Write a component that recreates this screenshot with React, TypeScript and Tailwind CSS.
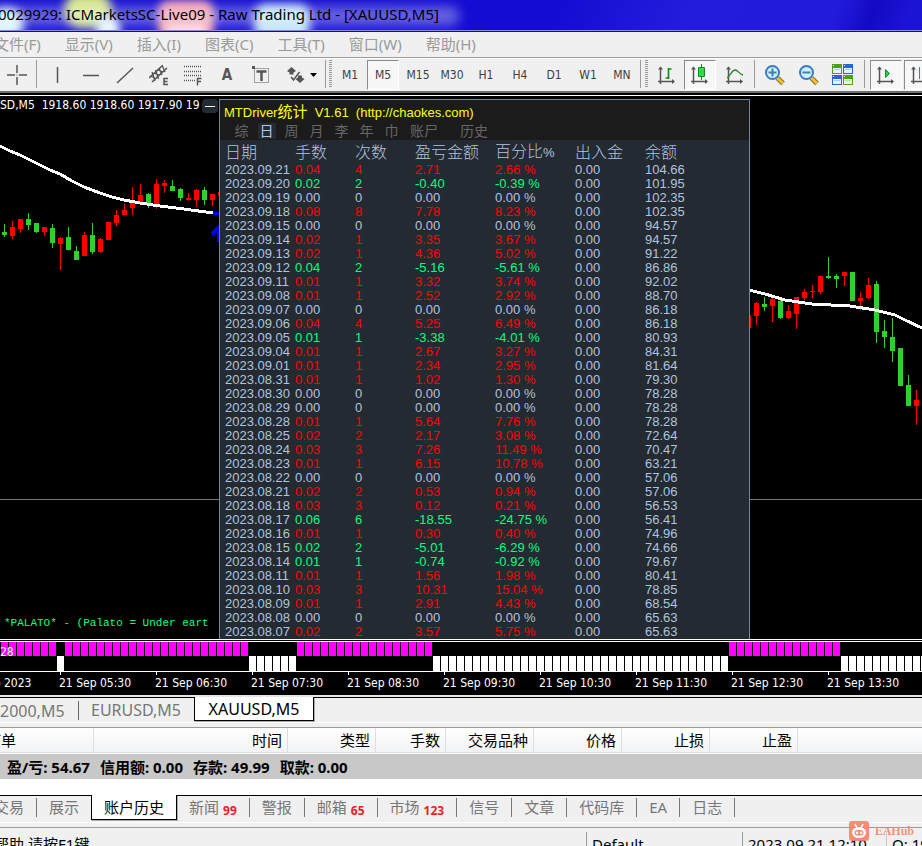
import type { ReactNode } from "react";

const UI = "font-['Noto_Sans','Noto_Sans_CJK_SC',sans-serif]";
const TAHOMA = "font-['DejaVu_Sans_Condensed','Noto_Sans',sans-serif]";

/* ---------- data ---------- */

const RECORDS = `2023.09.21|0.04|4|2.71|2.66|104.66
2023.09.20|0.02|2|-0.40|-0.39|101.95
2023.09.19|0.00|0|0.00|0.00|102.35
2023.09.18|0.08|8|7.78|8.23|102.35
2023.09.15|0.00|0|0.00|0.00|94.57
2023.09.14|0.02|1|3.35|3.67|94.57
2023.09.13|0.02|1|4.36|5.02|91.22
2023.09.12|0.04|2|-5.16|-5.61|86.86
2023.09.11|0.01|1|3.32|3.74|92.02
2023.09.08|0.01|1|2.52|2.92|88.70
2023.09.07|0.00|0|0.00|0.00|86.18
2023.09.06|0.04|4|5.25|6.49|86.18
2023.09.05|0.01|1|-3.38|-4.01|80.93
2023.09.04|0.01|1|2.67|3.27|84.31
2023.09.01|0.01|1|2.34|2.95|81.64
2023.08.31|0.01|1|1.02|1.30|79.30
2023.08.30|0.00|0|0.00|0.00|78.28
2023.08.29|0.00|0|0.00|0.00|78.28
2023.08.28|0.01|1|5.64|7.76|78.28
2023.08.25|0.02|2|2.17|3.08|72.64
2023.08.24|0.03|3|7.26|11.49|70.47
2023.08.23|0.01|1|6.15|10.78|63.21
2023.08.22|0.00|0|0.00|0.00|57.06
2023.08.21|0.02|2|0.53|0.94|57.06
2023.08.18|0.03|3|0.12|0.21|56.53
2023.08.17|0.06|6|-18.55|-24.75|56.41
2023.08.16|0.01|1|0.30|0.40|74.96
2023.08.15|0.02|2|-5.01|-6.29|74.66
2023.08.14|0.01|1|-0.74|-0.92|79.67
2023.08.11|0.01|1|1.56|1.98|80.41
2023.08.10|0.03|3|10.31|15.04|78.85
2023.08.09|0.01|1|2.91|4.43|68.54
2023.08.08|0.00|0|0.00|0.00|65.63
2023.08.07|0.02|2|3.57|5.75|65.63`
  .split("\n")
  .map((line) => line.split("|"));

/* x, rising (r) or falling (g), high, body top, body bottom, low */
type Candle = [number, "r" | "g", number, number, number, number];

const CANDLES: Candle[] = [
  [4, "g", 224, 232, 235, 237], [12, "r", 221, 227, 236, 239], [20, "r", 219, 219, 229, 233],
  [28, "g", 213, 219, 225, 230], [36, "g", 223, 223, 232, 233], [44, "r", 227, 227, 232, 236],
  [52, "g", 224, 228, 243, 248], [60, "r", 237, 238, 244, 270], [68, "g", 227, 237, 250, 250],
  [76, "g", 246, 251, 260, 260], [84, "r", 232, 235, 256, 256], [92, "g", 223, 235, 252, 254],
  [100, "r", 238, 239, 252, 253], [108, "r", 222, 222, 240, 240], [116, "r", 210, 215, 223, 226],
  [124, "r", 204, 210, 215, 215], [132, "r", 187, 200, 208, 215], [140, "r", 184, 195, 202, 205],
  [148, "g", 193, 194, 203, 208], [156, "r", 179, 184, 205, 209], [164, "r", 180, 183, 186, 193],
  [172, "g", 180, 186, 191, 191], [180, "g", 188, 189, 198, 201], [188, "r", 193, 198, 200, 201],
  [196, "r", 189, 190, 200, 207], [204, "g", 187, 190, 200, 205], [212, "r", 194, 194, 200, 206],
  [220, "r", 192, 192, 196, 196], [748, "r", 315, 315, 328, 328], [756, "r", 302, 303, 316, 325],
  [764, "g", 297, 304, 307, 311], [772, "r", 298, 299, 306, 322], [780, "g", 299, 301, 318, 319],
  [788, "r", 305, 311, 318, 319], [796, "r", 297, 297, 314, 329], [804, "r", 289, 292, 298, 300],
  [812, "r", 285, 291, 292, 298], [820, "r", 276, 276, 292, 294], [828, "g", 257, 276, 278, 279],
  [836, "g", 274, 276, 279, 288], [844, "r", 272, 272, 276, 286], [852, "g", 272, 272, 301, 301],
  [860, "r", 292, 298, 301, 310], [868, "r", 278, 285, 298, 299], [876, "g", 281, 284, 332, 343],
  [884, "g", 320, 331, 337, 348], [892, "g", 318, 337, 351, 362], [900, "g", 348, 348, 386, 386],
  [908, "g", 375, 385, 406, 406], [916, "r", 390, 400, 406, 425],
];

const CHART_TOP = 96;

/* ranges of bar indexes drawn in the upper (magenta) lane */
const isUp = (i: number) => i <= 6 || (i >= 8 && i <= 30) || (i >= 37 && i <= 53) || (i >= 91 && i <= 104);
const BARS = Array.from({ length: 240 }, (_, i) => i);
const TIMES = ["21 Sep 2023", "21 Sep 05:30", "21 Sep 06:30", "21 Sep 07:30", "21 Sep 08:30", "21 Sep 09:30", "21 Sep 10:30", "21 Sep 11:30", "21 Sep 12:30", "21 Sep 13:30"];

/* ---------- title and menu ---------- */

function TitleBar() {
  return (
    <header className="relative h-8 shrink-0 overflow-hidden border-b border-[#14107e] bg-linear-[110deg,#140cd0_0%,#140cd2_60%,#241cdc_74%,#231bdc_90%,#140ac4_94%,#1c14d4_98%]">
      <div className="absolute -left-3 top-2 h-8 w-9 rounded-full bg-[#d6f4ff] blur-[5px]" />
      <div className="absolute left-16 -top-2 h-9 w-12 rounded-full bg-[#d2e488] blur-[5px]" />
      <div className="absolute left-24 top-4 h-7 w-6 rounded-full bg-[#e6f6ff] blur-[4px]" />
      <div className="absolute left-[158px] top-0 h-10 w-14 rounded-xl bg-[#f09aac] blur-[4px]" />
      <div className="absolute left-[166px] top-6 h-4 w-10 bg-[#ffdcea] blur-[4px]" />
      <div className="absolute left-[254px] top-1 h-9 w-14 rounded-xl bg-[#bfe4fa] blur-[5px]" />
      <div className="absolute -left-4 top-1.5 h-5 w-[476px] rounded-full bg-white/35 blur-[6px]" />
      <div className="absolute inset-x-0 bottom-0 h-px bg-[#8c88e0]" />
      <h1 className="relative -ml-0.5 whitespace-nowrap text-[15px] leading-7 text-black">
        0029929: ICMarketsSC-Live09 - Raw Trading Ltd - [XAUUSD,M5]
      </h1>
    </header>
  );
}

const MENUS = ["文件(F)", "显示(V)", "插入(I)", "图表(C)", "工具(T)", "窗口(W)", "帮助(H)"];

function MenuBar() {
  return (
    <nav className="-ml-1.5 flex h-[26px] shrink-0 items-center gap-6 border-b border-[#9d9d9d] text-[15px] text-[#9a9a9a]">
      {MENUS.map((m) => (
        <button key={m} className="whitespace-nowrap">{m}</button>
      ))}
    </nav>
  );
}

/* ---------- toolbar ---------- */

function Tool({ label, pressed, wide, children }: { label: string; pressed?: boolean; wide?: boolean; children: ReactNode }) {
  return (
    <div className={`flex h-full shrink-0 ${wide ? "w-[47px]" : "w-[34px]"}`}>
      <button
        aria-label={label}
        className={`flex h-[30px] items-center justify-center ${wide ? "w-[47px]" : pressed ? "w-8 border border-b-white border-l-[#8c8c8c] border-r-white border-t-[#8c8c8c] bg-[#f7f7f7]" : "w-[34px]"}`}
      >
        {children}
      </button>
    </div>
  );
}

const Divider = ({ className }: { className: string }) => <div className={`h-7 w-px shrink-0 bg-[#9a9a9a] ${className}`} />;

const Grip = ({ className }: { className: string }) => (
  <div className={`h-[27px] w-[3px] shrink-0 bg-[repeating-linear-gradient(#9a9a9a_0_1px,#f0f0f0_1px_2px)] ${className}`} />
);

function Icon({ children, w = 20 }: { children: ReactNode; w?: number }) {
  return (
    <svg width={w} height="22" viewBox={`0 0 ${w} 22`} fill="none" stroke="#555">
      {children}
    </svg>
  );
}

const Axes = () => (
  <g>
    <path d="M3.500 3v17M1 17.500h16" strokeWidth="1.500" />
    <path d="M1 5.500l2.500-3 2.500 3zM15 15l3 2.500-3 2.500z" fill="#555" stroke="none" />
  </g>
);

function Magnifier({ plus }: { plus?: boolean }) {
  return (
    <Icon w={22}>
      <path d="M13.500 14l5.500 5.500" stroke="#8d6a14" strokeWidth="5" />
      <path d="M13.500 14l5.500 5.500" stroke="#ecc43c" strokeWidth="3" />
      <circle cx="8.500" cy="8.500" r="6.500" fill="#d3eefb" stroke="#3a7cc0" strokeWidth="2" />
      <path d={plus ? "M4.500 8.500h8M8.500 4.500v8" : "M4.500 8.500h8"} stroke="#3a83b4" strokeWidth="2" />
    </Icon>
  );
}

function WindowsIcon() {
  const tiles = [[0, 0, "#4aa116"], [11, 0, "#2c61d8"], [0, 11, "#2c61d8"], [11, 11, "#4aa116"]] as const;
  return (
    <Icon w={22}>
      {tiles.map(([x, y, c]) => (
        <g key={`${x}-${y}`} stroke="none">
          <rect x={x} y={y} width="10" height="10" fill={c} />
          <rect x={x + 1} y={y + 1} width="1" height="1" fill="#fff" />
          <rect x={x + 1} y={y + 4} width="8" height="5" fill="#e6f2ff" />
          <rect x={x + 2} y={y + 5} width="6" height="1" fill={c} opacity="0.3" />
        </g>
      ))}
    </Icon>
  );
}

const FRAMES = ["M1", "M5", "M15", "M30", "H1", "H4", "D1", "W1", "MN"];

function Toolbar() {
  return (
    <div className="flex h-[33px] shrink-0 overflow-hidden border-t border-white pt-px">
      <Tool label="十字光标">
        <Icon><path d="M10 1v8M10 13v8M0 11h8M12 11h8" strokeWidth="1.500" /><path d="M10 10.500v1" /></Icon>
      </Tool>
      <Divider className="ml-0.5 mr-[3px]" />
      <Tool label="垂直线"><Icon><path d="M10.500 3v16" strokeWidth="1.500" /></Icon></Tool>
      <Tool label="水平线"><Icon><path d="M2 11.500h16" strokeWidth="1.500" /></Icon></Tool>
      <Tool label="趋势线"><Icon><path d="M2 19L18 4" strokeWidth="1.500" /></Icon></Tool>
      <Tool label="等距通道">
        <Icon>
          <path d="M0 14L13 2M3 18L18 4" strokeWidth="1.500" />
          <path d="M3 8l3 9M6.500 6l3 9M10 4l3 7M13 1l3 7M1 12l5 2M5 9l5 2M9 6l5 2" strokeWidth="1.300" />
          <path d="M19 14.500h-4v6h4M15 17.500h3.500" strokeWidth="1.500" />
        </Icon>
      </Tool>
      <Tool label="斐波那契回调线">
        <Icon>
          <path d="M1 2.500h18M1 7.500h18M1 11.500h18M1 16.500h11" strokeWidth="1.300" strokeDasharray="1 1" />
          <path d="M18.500 14.500h-4v7M14.500 17.500h3.500" strokeWidth="1.500" />
        </Icon>
      </Tool>
      <Tool label="文本"><span className={`${TAHOMA} text-[15px] font-bold text-[#555]`}>A</span></Tool>
      <Tool label="文本标签">
        <Icon>
          <path d="M3.500 4.500h14v14h-14z" strokeDasharray="1 1" />
          <path d="M1 2h3v3H1z" fill="#555" stroke="none" />
          <path d="M5.500 7.500h10M10.500 7v10" strokeWidth="2.500" />
        </Icon>
      </Tool>
      <Tool label="箭头" wide>
        <Icon w={32}>
          <path d="M5.500 3L10 7 7.500 8.500v2h-4v-2L1 7z" fill="#555" stroke="none" />
          <path d="M14 19l4.500-4-2.500-1.500v-2h-4v2L9.500 15z" fill="#555" stroke="none" />
          <path d="M5 13l2.500 3 6-8" strokeWidth="1.500" />
          <path d="M24 9h7l-3.500 4z" fill="#000" stroke="none" />
        </Icon>
      </Tool>
      <Divider className="mr-[3px]" />
      <Grip className="mr-px" />
      {FRAMES.map((f) => (
        <Tool key={f} label={f} pressed={f === "M5"}>
          <span className={`${TAHOMA} text-xs text-[#404040]`}>{f}</span>
        </Tool>
      ))}
      <Divider className="ml-px mr-1" />
      <Grip className="mr-0.5" />
      <Tool label="柱形图">
        <Icon><Axes /><path d="M11.500 4v11M11.500 5h3M8.500 14h3" stroke="#158a25" strokeWidth="1.700" /></Icon>
      </Tool>
      <Tool label="阴阳烛" pressed>
        <Icon><Axes /><path d="M11.500 0v16" stroke="#158a25" /><path d="M8.500 3.500h6v9h-6z" fill="#23e043" stroke="#158a25" /></Icon>
      </Tool>
      <Tool label="折线图">
        <Icon><Axes /><path d="M2 14c4-3 5-8 8-8s4 4 8 5" stroke="#2f7f38" strokeWidth="1.300" /></Icon>
      </Tool>
      <Divider className="ml-0.5 mr-[3px]" />
      <Tool label="放大"><Magnifier plus /></Tool>
      <Tool label="缩小"><Magnifier /></Tool>
      <Tool label="平铺窗口"><WindowsIcon /></Tool>
      <Divider className="ml-1 mr-[5px]" />
      <Tool label="自动滚动" pressed>
        <Icon><Axes /><path d="M9.500 5.500v8l4-4z" fill="#23d043" stroke="#158a25" /></Icon>
      </Tool>
      <Tool label="图表平移" pressed>
        <Icon><Axes /><path d="M9.500 3v12" stroke="#3a7cc0" /></Icon>
      </Tool>
    </div>
  );
}

/* ---------- chart ---------- */

function PriceChart() {
  return (
    <svg className="absolute inset-0 h-full w-full" shapeRendering="crispEdges">
      <rect x="0" y={499 - CHART_TOP} width="100%" height="1" fill="#777" />
      <g transform={`translate(0 ${-CHART_TOP})`}>
        {CANDLES.map(([x, kind, high, top, bottom, low]) => (
          <g key={x} fill={kind === "r" ? "#ff0000" : "#32cd32"}>
            <rect x={x} y={high} width="1" height={low - high} />
            <rect x={x - 2} y={top} width="5" height={bottom - top} />
          </g>
        ))}
        <g fill="none" stroke="#fff" strokeWidth="3">
          <path d="M0 146L10 151L20 155L36 163L50 170L60 174L72 181L84 187L100 193L112 197L124 200L140 203L160 206L180 208.500L213 213" />
          <path d="M749 290L765 294L785 300L812 304L850 306L875 310L895 315L905 320L922 328" />
        </g>
        <path d="M213 213h6" stroke="#00f" strokeWidth="3" />
        <path d="M211 232l8-8v18h-2v-9l-4 3z" fill="#00f" />
      </g>
    </svg>
  );
}

const PANEL_TABS = ["综", "日", "周", "月", "李", "年", "巾"];

function StatsPanel() {
  return (
    <section className="absolute left-[219px] top-[3px] w-[531px] border border-b-0 border-[#7386a0] bg-[#242a32] pb-0.5 font-['Liberation_Sans','Noto_Sans_CJK_SC',sans-serif]">
      <div className="h-10 bg-[#1b1b1b]">
        <h2 className="h-[23px] whitespace-pre pl-1 text-[13px] leading-[23px] text-[#ffff00]">
          MTDriver<span className="text-[15px]">统计</span>  V1.61  (http://chaokes.com)
        </h2>
        <div className="flex pl-[9px] text-[14px] leading-4 text-[#666]">
          {PANEL_TABS.map((t) => (
            <button key={t} className="flex w-[25px] justify-center">
              <span className={t === "日" ? "w-[18px] bg-[#242a32] text-[#b8c8dc]" : "w-[18px]"}>{t}</span>
            </button>
          ))}
          <button className="w-[50px] pl-1.5 text-left">账尸</button>
          <button className="w-[50px] pl-1.5 text-left">历史</button>
        </div>
      </div>
      <table className="w-full table-fixed border-collapse text-left text-[13px] leading-[14px] text-[#b0c4de]">
        <colgroup>
          <col className="w-[75px]" />
          <col className="w-[60px]" />
          <col className="w-[60px]" />
          <col className="w-20" />
          <col className="w-20" />
          <col className="w-[70px]" />
          <col />
        </colgroup>
        <thead>
          <tr className="h-5 text-[16px] leading-5">
            {["日期", "手数", "次数", "盈亏金额", "百分比", "出入金", "余额"].map((h, i) => (
              <th key={h} className={`whitespace-nowrap p-0 pt-0.5 font-light ${i === 0 ? "pl-[5px]" : ""}`}>
                {h}
                {h === "百分比" && <span className="text-[13px]">%</span>}
              </th>
            ))}
          </tr>
        </thead>
        <tbody>
          {RECORDS.map(([date, lots, count, profit, pct, balance]) => {
            const tone = profit.startsWith("-") ? "text-[#00ff7f]" : profit === "0.00" ? "" : "text-[#ff0000]";
            return (
              <tr key={date} className="h-[14px]">
                <td className="p-0 pl-[5px]">{date}</td>
                <td className={`p-0 ${tone}`}>{lots}</td>
                <td className={`p-0 ${tone}`}>{count}</td>
                <td className={`p-0 ${tone}`}>{profit}</td>
                <td className={`p-0 ${tone}`}>{pct} %</td>
                <td className="p-0">0.00</td>
                <td className="p-0">{balance}</td>
              </tr>
            );
          })}
        </tbody>
      </table>
    </section>
  );
}

function ChartWindow() {
  return (
    <main className={`shrink-0 overflow-hidden border-t-2 border-[#6e6e6e] bg-black text-white ${TAHOMA}`}>
      <div className="mt-0.5 h-px bg-white" />
      <div className="relative h-[543px] overflow-hidden">
        <PriceChart />
        <p className="relative whitespace-pre text-xs leading-[18px]">SD,M5  1918.60 1918.60 1917.90 19</p>
        <button aria-label="最小化" className="absolute left-[202px] top-[3px] flex h-[14px] w-4 items-center justify-center rounded-sm bg-[#242a32]">
          <span className="h-px w-2.5 bg-white" />
        </button>
        <p className="absolute bottom-2 left-1 whitespace-nowrap font-['Liberation_Mono',monospace] text-[11px] leading-4 text-[#00ff7f]">
          *PALATO* - (Palato = Under eart
        </p>
        <StatsPanel />
      </div>
      <div className="relative h-[33px] border-b border-t border-white">
        <div className="mt-px h-px bg-white" />
        <svg className="block h-[29px] w-full" shapeRendering="crispEdges">
          {BARS.map((i) => (
            <rect key={i} x={i * 8 + 1} y={isUp(i) ? 0 : 14} width="7" height={isUp(i) ? 14 : 15} fill={isUp(i) ? "#ff00ff" : "#ffffff"} />
          ))}
        </svg>
        <span className="absolute left-0 top-1 text-xs leading-4">28</span>
      </div>
      <div className="-ml-[37px] flex h-[23px]">
        {TIMES.map((t) => (
          <div key={t} className="w-24 shrink-0">
            <div className="ml-px h-[3px] w-px bg-white" />
            <p className="whitespace-nowrap text-xs leading-4">{t}</p>
          </div>
        ))}
      </div>
    </main>
  );
}

function ChartTabs() {
  return (
    <div className="shrink-0 border-t-2 border-[#e4e4e4]">
      <div className="flex h-[26px] overflow-hidden border-b border-white text-base leading-6 text-[#777]">
        <div className="flex h-[26px] w-[194px] border-t border-black">
          <button className="my-[3px] w-[79px] whitespace-nowrap border-r border-[#666] pr-3.5 text-right leading-[18px]">2000,M5</button>
          <button className="h-6 pl-3 leading-6">EURUSD,M5</button>
        </div>
        <button className="h-6 w-[120px] border border-t-0 border-black bg-white text-black shadow-[1px_1px_0_#aaa]">XAUUSD,M5</button>
        <div className="flex-1 border-t border-black" />
      </div>
    </div>
  );
}

/* ---------- terminal ---------- */

const COLUMNS: [string, string][] = [
  ["时间", "w-[194px]"], ["类型", "w-[88px]"], ["手数", "w-[70px]"], ["交易品种", "w-[88px]"],
  ["价格", "w-[88px]"], ["止损", "w-[88px]"], ["止盈", "w-[88px]"],
];

function History() {
  return (
    <div className="mt-1 shrink-0 overflow-hidden border-t border-[#9a9a9a] bg-white pb-4 text-[15px] text-black">
      <div className="-ml-5">
        <table className="w-full table-fixed border-separate border-spacing-0 leading-6">
          <thead>
            <tr className="h-[25px] bg-linear-to-b from-white to-[#f1f2f4]">
              <th className="w-[114px] border-b border-r border-[#dedede] p-0 pl-1.5 text-left font-normal">订单</th>
              {COLUMNS.map(([name, width]) => (
                <th key={name} className={`border-b border-r border-[#dedede] p-0 pr-[5px] text-right font-normal ${width}`}>{name}</th>
              ))}
              <th aria-label="空" className="border-b border-[#dedede] p-0" />
            </tr>
          </thead>
          <tbody>
            <tr className="h-[26px] bg-[#c8c8c8]">
              <td colSpan={9} className="border-t border-white p-0 font-bold">
                <div className="flex gap-2.5 whitespace-nowrap pl-[27px]">
                  <span>盈/亏: 54.67</span>
                  <span>信用额: 0.00</span>
                  <span>存款: 49.99</span>
                  <span>取款: 0.00</span>
                </div>
              </td>
            </tr>
          </tbody>
        </table>
      </div>
    </div>
  );
}

const TERMINAL_TABS: [string, string?][] = [
  ["交易"], ["展示"], ["账户历史"], ["新闻", "99"], ["警报"], ["邮箱", "65"], ["市场", "123"], ["信号"], ["文章"], ["代码库"], ["EA"], ["日志"],
];

function TerminalTabs() {
  return (
    <div className="h-7 shrink-0 overflow-hidden border-b border-white text-[15px] text-[#777]">
      <div className="flex">
        {TERMINAL_TABS.map(([name, count], i) =>
          name === "账户历史" ? (
            <button key={name} className="h-[25px] shrink-0 border border-t-0 border-black bg-white px-3 leading-6 text-black shadow-[1px_1px_0_#aaa]">
              {name}
            </button>
          ) : (
            <div key={name} className={`h-[25px] shrink-0 border-t border-black pt-0.5 ${i === 0 ? "-ml-[18px]" : ""}`}>
              <button className={`flex h-[19px] items-center whitespace-nowrap px-3 ${i === 1 ? "" : "border-r border-[#777]"}`}>
                {name}
                {count && <span className="ml-1 pt-1.5 text-xs font-bold leading-3 text-[#ee1c25]">{count}</span>}
              </button>
            </div>
          ),
        )}
        <div className="flex-1 border-t border-black" />
      </div>
    </div>
  );
}

function StatusBar() {
  return (
    <footer className="mt-1 flex h-7 shrink-0 overflow-hidden border-t border-[#9a9a9a] pt-1 text-[15px] leading-6 text-black">
      <p className="-ml-[25px] w-[612px] shrink-0 whitespace-nowrap border-r border-[#9a9a9a] pl-1">寻帮助,请按F1键</p>
      <p className="w-[156px] shrink-0 border-r border-[#9a9a9a] pl-[5px]">Default</p>
      <p className="w-36 shrink-0 whitespace-nowrap border-r border-[#c8c8c8] pl-[5px]">2023.09.21 12:10</p>
      <p className="whitespace-nowrap pl-[5px]">O: 1918.60</p>
    </footer>
  );
}

function Watermark() {
  return (
    <div className="absolute bottom-[5px] right-2 flex items-center gap-1.5 text-[#f58468] opacity-90">
      <svg width="20" height="20" viewBox="0 0 20 20">
        <rect width="20" height="20" rx="3" fill="#f58468" />
        <path d="M6 3l2 4M14 3l-2 4" stroke="#fff" strokeWidth="1.500" fill="none" />
        <ellipse cx="10" cy="11.500" rx="7" ry="5.500" fill="#fff" />
        <rect x="5.500" y="9" width="9" height="5.500" rx="2.700" fill="#f58468" />
        <circle cx="8" cy="11.700" r="1.200" fill="#fff" />
        <circle cx="12" cy="11.700" r="1.200" fill="#fff" />
      </svg>
      <span className="font-['Liberation_Serif',serif] text-xs font-bold leading-5">EAHub</span>
    </div>
  );
}

export default function App() {
  return (
    <div className={`relative flex h-screen flex-col overflow-hidden bg-[#f0f0f0] ${UI}`}>
      <TitleBar />
      <MenuBar />
      <Toolbar />
      <ChartWindow />
      <ChartTabs />
      <History />
      <TerminalTabs />
      <StatusBar />
      <Watermark />
    </div>
  );
}
